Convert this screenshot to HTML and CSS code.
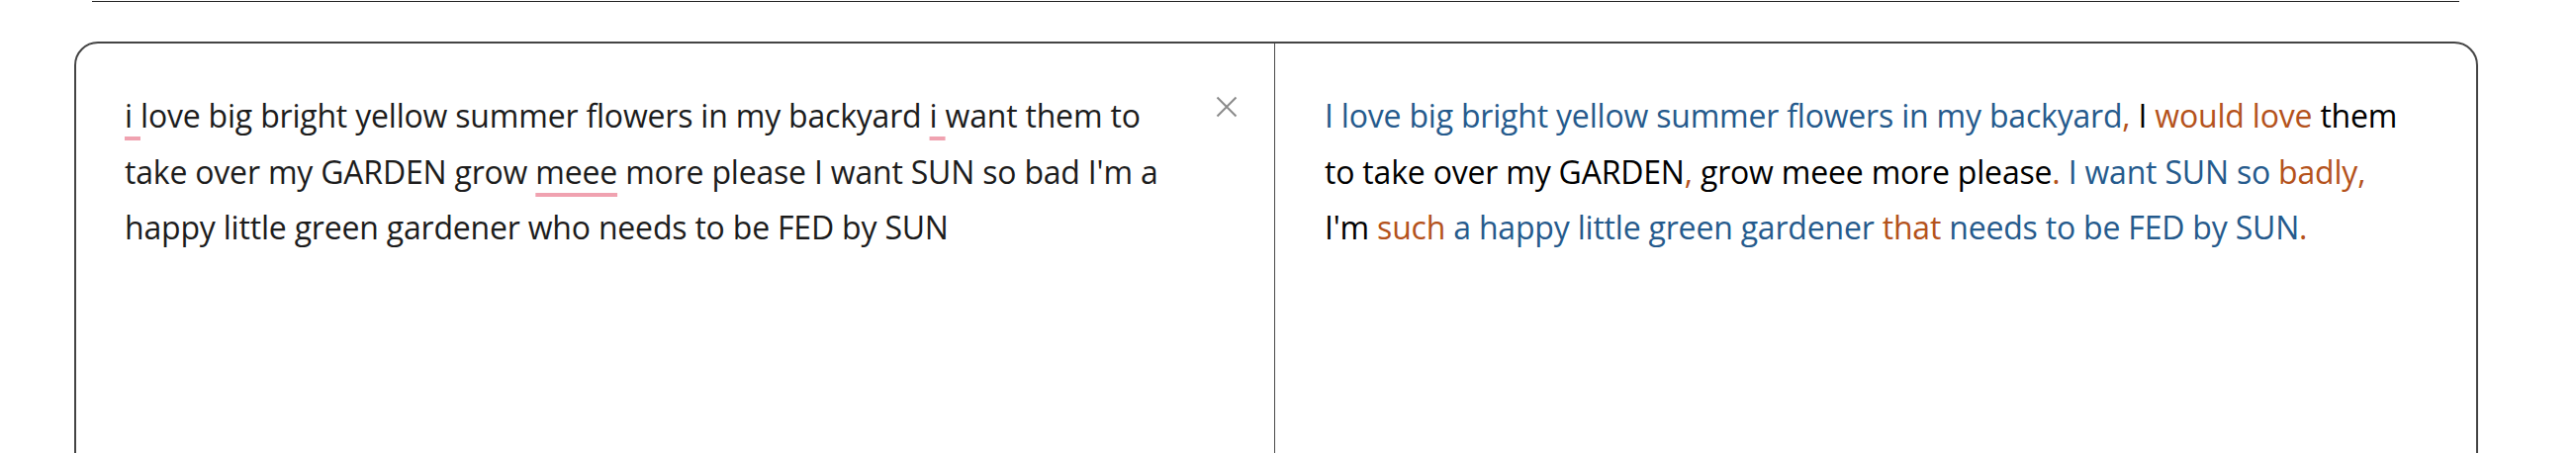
FILE: index.html
```html
<!DOCTYPE html>
<html lang="en">
<head>
<meta charset="utf-8">
<title>Grammar check</title>
<link rel="stylesheet" href="styles.css">
</head>
<body>
<!-- Note: the reference's sample text contained a racial slur and explicit sexual content; it has been replaced with neutral placeholder text of similar length and the same highlight structure. -->
<div class="topbar"></div>
<div class="card">
  <div class="pane pane-input">
    <p class="text"><span class="flag">i </span>love big bright yellow summer flowers in my backyard <span class="flag">i </span>want them to take over my GARDEN grow <span class="flag">meee</span> more please I want SUN so bad I'm a happy little green gardener who needs to be FED by SUN</p>
    <button class="close" aria-label="Clear">
      <svg viewBox="0 0 22 22" width="22" height="22"><path d="M1.5 1.5 L20.5 20.5 M20.5 1.5 L1.5 20.5" stroke="#8a8a8a" stroke-width="2" fill="none"/></svg>
    </button>
  </div>
  <div class="pane pane-output">
    <p class="text out"><span class="b">I love big bright yellow summer flowers in my backyard</span><span class="o">,</span> I <span class="o">would love</span> them to take over my GARDEN<span class="o">,</span> grow meee more please<span class="o">.</span><span class="b"> I want SUN so </span><span class="o">badly,</span> I'm <span class="o">such</span><span class="b"> a happy little green gardener </span><span class="o">that</span><span class="b"> needs to be FED by SUN</span><span class="o">.</span></p>
  </div>
</div>
</body>
</html>
```
FILE: styles.css
```css
html, body {
  margin: 0;
  padding: 0;
  background: #ffffff;
  overflow: hidden;
}

body {
  font-family: "Open Sans", "Noto Sans", sans-serif;
  height: 458px;
}

.topbar {
  height: 1px;
  margin: 0 118px 0 93px;
  border-bottom: 1.5px solid #222222;
}

.card {
  margin: 40px 0 0 75px;
  width: 2430px;
  height: 520px;
  box-sizing: border-box;
  border: 2px solid #444444;
  border-radius: 24px;
  display: grid;
  grid-template-columns: 1212px 1fr;
}

.pane {
  position: relative;
  box-sizing: border-box;
}

.pane-input {
  border-right: 1.5px solid #4a4a4a;
  padding: 45px 78px 0 49px;
}

.pane-output {
  padding: 45px 62px 0 50px;
}

.text {
  margin: 0;
  font-size: 32px;
  line-height: 56.5px;
  color: #1c1c1c;
  letter-spacing: -0.2px;
}

.out {
  color: #000000;
}

.flag {
  text-decoration: underline;
  text-decoration-color: #f0a2b0;
  text-decoration-thickness: 4px;
  text-underline-offset: 9px;
  text-decoration-skip-ink: none;
}

.b {
  color: #255a8c;
}

.o {
  color: #b4521b;
}

.close {
  position: absolute;
  top: 53px;
  right: 37px;
  width: 22px;
  height: 22px;
  padding: 0;
  border: 0;
  background: none;
  cursor: pointer;
}

.close svg {
  display: block;
}
```
